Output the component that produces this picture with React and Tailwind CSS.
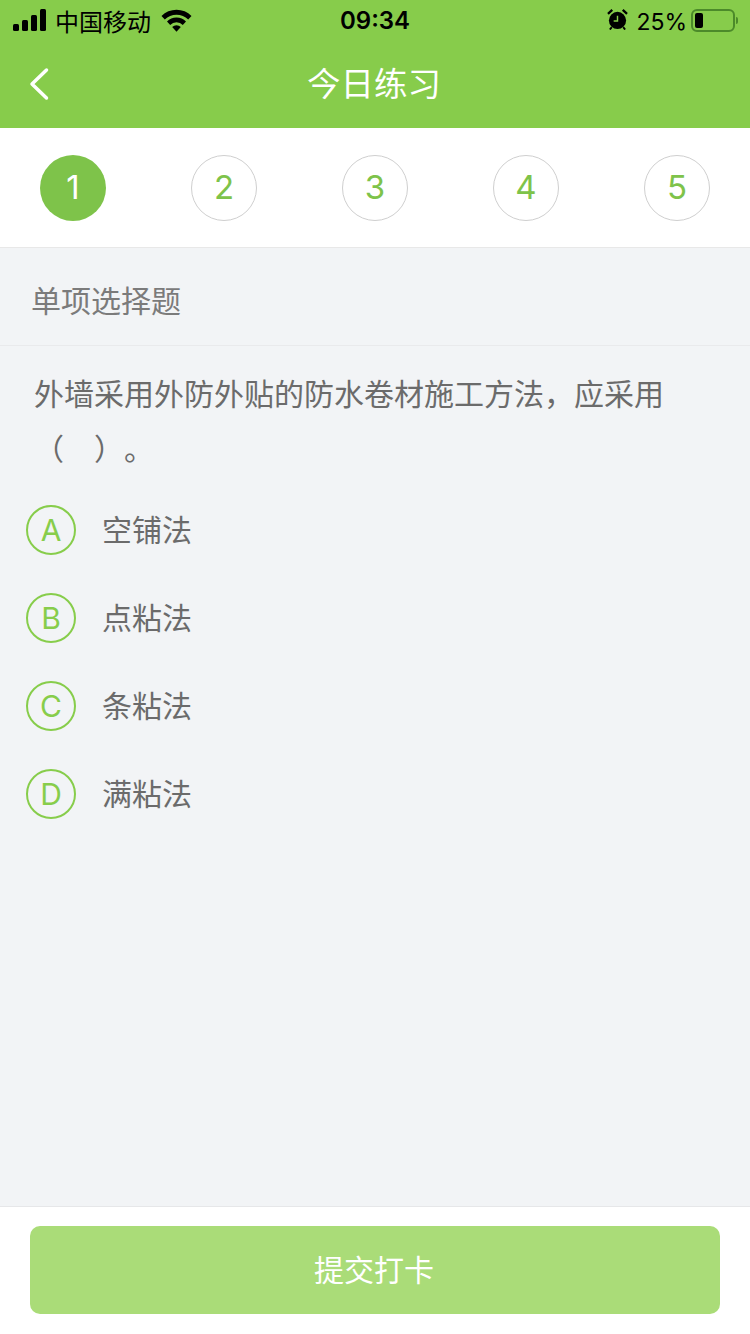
const cjk = { fontFamily: '"Noto Sans CJK SC", "Liberation Sans", sans-serif' };
const latin = { fontFamily: '"Inter", "Liberation Sans", sans-serif' };

function StatusBar() {
  return (
    <div className="flex h-[40px] items-center justify-between text-black" style={cjk}>
      <div className="flex w-[260px] items-center pl-[13px]">
        <svg width="34" height="22" viewBox="0 0 34 22" fill="#000">
          <rect x="0" y="15" width="6" height="7" rx="1.5" />
          <rect x="9" y="11" width="6" height="11" rx="1.5" />
          <rect x="18" y="6" width="6" height="16" rx="1.5" />
          <rect x="27" y="0" width="6" height="22" rx="1.5" />
        </svg>
        <span className="ml-[8px] pt-[2px] text-[24px] leading-[40px]">中国移动</span>
        <svg className="ml-[10px]" width="31" height="23" viewBox="0 0 31 23">
          <path d="M0.5 7 A21 21 0 0 1 30.5 7 L27.2 10.6 A16.4 16.4 0 0 0 3.8 10.6 Z" fill="#000" />
          <path d="M6 12.6 A13 13 0 0 1 25 12.6 L21.8 16 A8.6 8.6 0 0 0 9.2 16 Z" fill="#000" />
          <path d="M11.2 18 A6 6 0 0 1 19.8 18 L15.5 22.8 Z" fill="#000" />
        </svg>
      </div>
      <span className="pt-[2px] text-[24px] font-semibold leading-[40px]" style={latin}>09:34</span>
      <div className="flex w-[260px] items-center justify-end pr-[12px]">
        <svg className="mb-[2px]" width="21" height="21" viewBox="0 0 22 22">
          <circle cx="11" cy="12" r="9" fill="#000" />
          <path d="M11 7 V12.5 H7" stroke="#87cd4b" strokeWidth="1.5" fill="none" />
          <path d="M1 5 L5.5 1 M21 5 L16.5 1" stroke="#000" strokeWidth="2.5" />
          <path d="M5 19 L3 21.5 M17 19 L19 21.5" stroke="#000" strokeWidth="2" />
        </svg>
        <span className="ml-[8px] pt-[3px] text-[23px] leading-[40px]" style={latin}>25%</span>
        <div className="ml-[4px] flex h-[23px] w-[44px] items-center rounded-[6px] border-2 border-[#4c8a2a] p-[2px]">
          <div className="h-[15px] w-[8px] rounded-[2px] bg-black" />
        </div>
        <div className="ml-[1px] h-[7px] w-[2px] rounded-r-sm bg-[#4c8a2a]" />
      </div>
    </div>
  );
}

function Step({ n, active }) {
  return (
    <div
      className={
        active
          ? "flex h-[66px] w-[66px] items-center justify-center rounded-full bg-[#7ec34a] text-[33px] text-white"
          : "flex h-[66px] w-[66px] items-center justify-center rounded-full border border-[#cfcfcf] text-[33px] text-[#7ec34a]"
      }
    >
      {n}
    </div>
  );
}

function Option({ letter, text }) {
  return (
    <div className="flex h-[88px] items-center pl-[26px]">
      <div className="flex h-[50px] w-[50px] items-center justify-center rounded-full border-2 border-[#87cd4b] text-[30px] text-[#87cd4b]">
        {letter}
      </div>
      <span className="ml-[26px] pb-[4px] text-[30px] text-[#6b6b6b]" style={cjk}>{text}</span>
    </div>
  );
}

export default function App() {
  return (
    <div className="flex h-[1334px] w-[750px] flex-col overflow-hidden bg-[#f2f4f6]" style={latin}>
      <div className="h-[128px] bg-[#87cc4b]">
        <StatusBar />
        <div className="relative flex h-[88px] items-center justify-center pb-[4px] pr-[2px]">
          <svg className="absolute left-[28px] top-[27px]" width="24" height="34" viewBox="0 0 24 34" fill="none">
            <path d="M18.5 3 L4 17 L18.5 31" stroke="#fff" strokeWidth="3.5" strokeLinecap="round" strokeLinejoin="round" />
          </svg>
          <span className="text-[33.5px] leading-[44px] text-white" style={cjk}>今日练习</span>
        </div>
      </div>

      <div className="flex h-[120px] items-center justify-between border-b border-[#e8e8e8] bg-white px-[40px] pt-[1px]">
        {[1, 2, 3, 4, 5].map((n) => (
          <Step key={n} n={n} active={n === 1} />
        ))}
      </div>

      <div className="flex h-[98px] items-center border-b border-[#e9eaec] pl-[31px] pt-[6px] text-[30px] text-[#7b7b7b]" style={cjk}>
        单项选择题
      </div>

      <div className="px-[34px] pt-[19px] text-[30px] leading-[55px] text-[#6b6b6b] [text-spacing-trim:space-all]" style={cjk}>
        <div>{"外墙采用外防外贴的防水卷材施工方法\uFF0C应采用"}</div>
        <div>{"\uFF08\u3000\uFF09\u3002"}</div>
      </div>

      <div className="mt-[11px]">
        <Option letter="A" text="空铺法" />
        <Option letter="B" text="点粘法" />
        <Option letter="C" text="条粘法" />
        <Option letter="D" text="满粘法" />
      </div>

      <div className="mt-auto border-t border-[#e6e7e9] bg-white px-[30px] pb-[20px] pt-[19px]">
        <div className="flex h-[88px] items-center justify-center rounded-[10px] bg-[#aadc78] pb-[4px] pr-[2px] text-[30px] text-white" style={cjk}>
          提交打卡
        </div>
      </div>
    </div>
  );
}
